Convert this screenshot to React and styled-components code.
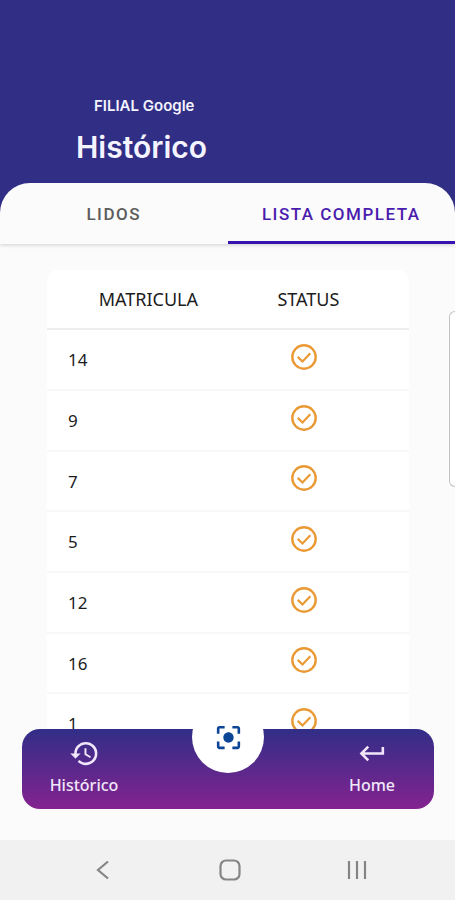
import { useState } from "react";
import styled, { createGlobalStyle } from "styled-components";
import { MdHistory, MdKeyboardReturn, MdCenterFocusStrong } from "react-icons/md";

const matriculas = [14, 9, 7, 5, 12, 16, 1];

const CheckIcon = () => (
  <svg width="26" height="26" viewBox="0 0 26 26" fill="none" stroke="#ea9a35" role="img" aria-label="Lido">
    <circle cx="13" cy="13" r="11.7" strokeWidth="2.4" />
    <path d="M6.7 12.9l4.8 4.6 7.8-8.2" strokeWidth="2.2" />
  </svg>
);

export default function App() {
  const [tab, setTab] = useState("completa");

  return (
    <>
      <GlobalStyle />
      <Screen>
        <Header>
          <Filial>FILIAL Google</Filial>
          <Title>Histórico</Title>
        </Header>
        <Sheet>
          <Tabs role="tablist">
            <Tab role="tab" aria-selected={tab === "lidos"} $active={tab === "lidos"} onClick={() => setTab("lidos")}>
              LIDOS
            </Tab>
            <Tab role="tab" aria-selected={tab === "completa"} $active={tab === "completa"} onClick={() => setTab("completa")}>
              LISTA COMPLETA
            </Tab>
          </Tabs>
          <List>
            <Table>
              <thead>
                <tr>
                  <HeadCell>MATRICULA</HeadCell>
                  <HeadCell $status>STATUS</HeadCell>
                </tr>
              </thead>
              <tbody>
                {matriculas.map((matricula) => (
                  <Row key={matricula}>
                    <NumberCell>{matricula}</NumberCell>
                    <StatusCell>
                      <CheckIcon />
                    </StatusCell>
                  </Row>
                ))}
              </tbody>
            </Table>
          </List>
          <BottomNav>
            <NavItem href="#historico">
              <MdHistory size={31} />
              Histórico
            </NavItem>
            <ScanButton aria-label="Ler código">
              <MdCenterFocusStrong size={31} />
            </ScanButton>
            <NavItem href="#home">
              <MdKeyboardReturn size={31} />
              Home
            </NavItem>
          </BottomNav>
        </Sheet>
        <SystemBar>
          <SystemButton aria-label="Voltar">
            <svg width="22" height="22" viewBox="0 0 22 22">
              <path d="M16 2.5L6 11l10 8.5" />
            </svg>
          </SystemButton>
          <SystemButton aria-label="Início">
            <svg width="22" height="22" viewBox="0 0 22 22">
              <rect x="1.5" y="1.5" width="19" height="19" rx="5.5" />
            </svg>
          </SystemButton>
          <SystemButton aria-label="Recentes">
            <svg width="22" height="22" viewBox="0 0 22 22">
              <path d="M3 2v18M11 2v18M19 2v18" />
            </svg>
          </SystemButton>
        </SystemBar>
        <EdgeHandle />
      </Screen>
    </>
  );
}

const GlobalStyle = createGlobalStyle`
  * {
    box-sizing: border-box;
  }

  body {
    margin: 0;
    font-family: "Noto Sans", sans-serif;
  }

  button {
    border: 0;
    padding: 0;
    background: none;
    font: inherit;
    cursor: pointer;
  }
`;

const Screen = styled.div`
  position: relative;
  display: flex;
  flex-direction: column;
  height: 100vh;
  overflow: hidden;
  background: #302e85;
`;

const Header = styled.header`
  padding: 96px 76px 17px;
  font-family: Inter, sans-serif;
  color: #f4f4ff;
`;

const Filial = styled.p`
  margin: 0 0 12px;
  padding-left: 18px;
  font-size: 15px;
  font-weight: 600;
  line-height: 20px;
`;

const Title = styled.h1`
  margin: 0;
  font-size: 30px;
  font-weight: 600;
  line-height: 38px;
`;

const Sheet = styled.main`
  flex: 1;
  min-height: 0;
  display: flex;
  flex-direction: column;
  overflow: hidden;
  border-radius: 30px 30px 0 0;
  background: #fbfbfb;
`;

const Tabs = styled.div`
  display: flex;
  height: 61px;
  flex-shrink: 0;
  box-shadow: 0 1px 4px rgba(0, 0, 0, 0.18);
`;

const Tab = styled.button`
  flex: 1;
  padding-top: 3px;
  border-bottom: 3px solid ${({ $active }) => ($active ? "#3714b0" : "transparent")};
  color: ${({ $active }) => ($active ? "#4a1cae" : "#5c5c5c")};
  font-family: Roboto, sans-serif;
  font-size: 17px;
  font-weight: 500;
  letter-spacing: 1.5px;
`;

const List = styled.div`
  flex: 1;
  min-height: 0;
  overflow: hidden;
  padding: 26px 46px 0 47px;
`;

const Table = styled.table`
  width: 100%;
  table-layout: fixed;
  border-spacing: 0;
  border-radius: 10px;
  background: #fff;
  color: #1c1c1c;
  font-size: 17px;
`;

const HeadCell = styled.th`
  width: ${({ $status }) => ($status ? "44%" : "56%")};
  height: 60px;
  padding: 0 ${({ $status }) => ($status ? "42px" : "0")} 0 0;
  border-bottom: 2px solid #eeeeee;
  font-size: 18px;
  font-weight: 400;
`;

const Row = styled.tr`
  height: 61px;

  &:nth-child(3n) {
    height: 60px;
  }

  td {
    border-bottom: 2px solid #f7f7f7;
  }
`;

const NumberCell = styled.td`
  padding: 0 0 0 21px;
`;

const StatusCell = styled.td`
  padding: 0 50px 6px 0;
  text-align: center;

  svg {
    display: block;
    margin: 0 auto;
  }
`;

const BottomNav = styled.nav`
  position: relative;
  display: flex;
  justify-content: space-between;
  flex-shrink: 0;
  height: 80px;
  margin: -40px 21px 31px 22px;
  padding: 0 12px;
  border-radius: 18px;
  background: linear-gradient(#312e87, #842390);
`;

const NavItem = styled.a`
  display: flex;
  flex-direction: column;
  align-items: center;
  width: 100px;
  padding-top: 9px;
  color: #f1e6fa;
  font-size: 16px;
  font-weight: 500;
  line-height: 32px;
  text-decoration: none;
`;

const ScanButton = styled.button`
  position: absolute;
  top: -28px;
  left: calc(50% - 36px);
  display: flex;
  align-items: center;
  justify-content: center;
  width: 72px;
  height: 72px;
  border-radius: 50%;
  background: #fff;
  color: #0c4595;
`;

const SystemBar = styled.footer`
  display: flex;
  flex-shrink: 0;
  height: 60px;
  padding: 0 34px 0 39px;
  background: #f1f1f1;
`;

const SystemButton = styled.button`
  flex: 1;
  display: flex;
  align-items: center;
  justify-content: center;

  svg {
    fill: none;
    stroke: #858585;
    stroke-width: 2.2;
  }
`;

/* drawer handle that floats over the right edge */
const EdgeHandle = styled.div`
  position: absolute;
  top: 311px;
  right: 0;
  width: 6px;
  height: 176px;
  border: 1px solid #c4c4c4;
  border-right: 0;
  border-radius: 6px 0 0 6px;
  background: #fff;
`;
